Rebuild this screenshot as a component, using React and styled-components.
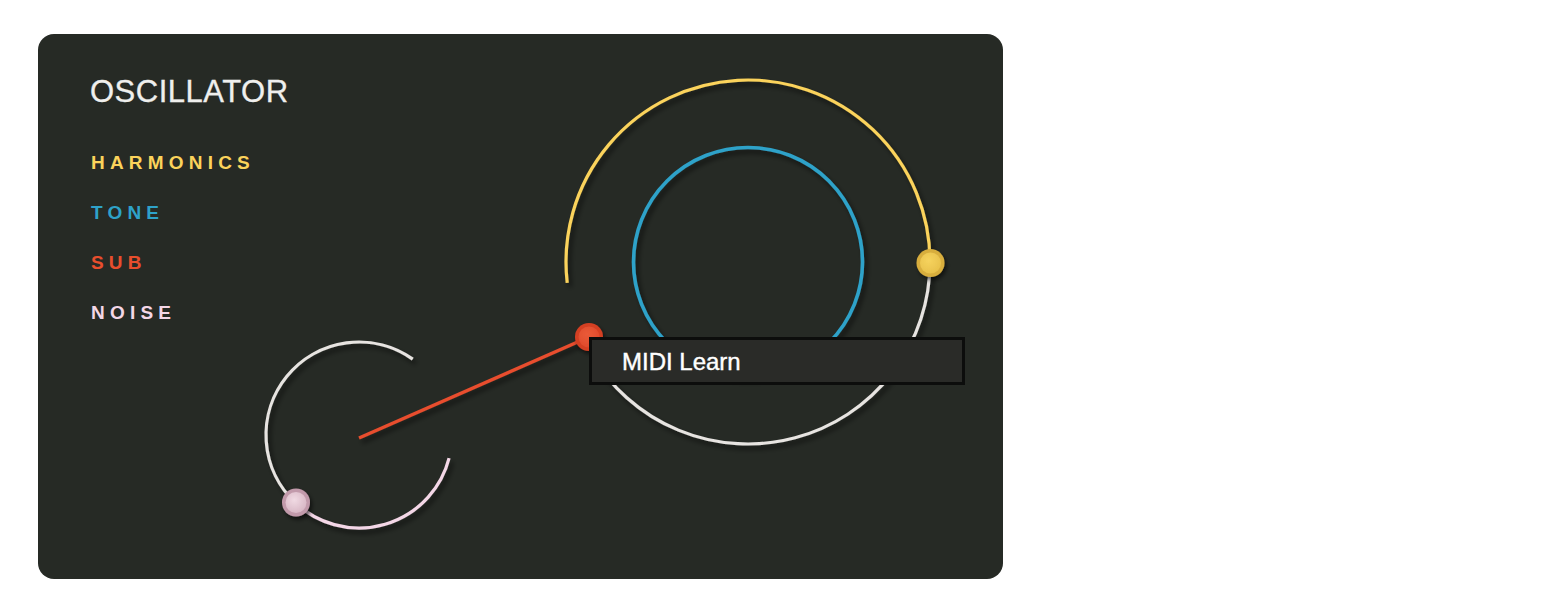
import React from 'react'
import styled, { createGlobalStyle } from 'styled-components'

const GlobalStyle = createGlobalStyle`
  html, body {
    margin: 0;
    padding: 0;
    background: #ffffff;
  }
  body {
    font-family: 'Liberation Sans', Arial, sans-serif;
  }
`

const colors = {
  panel: '#262a25',
  yellow: '#fbd35b',
  blue: '#2ea2c9',
  red: '#e84e2d',
  pink: '#f4d7e7',
  white: '#e7e4e1',
}

const params = [
  { name: 'HARMONICS', color: colors.yellow },
  { name: 'TONE', color: colors.blue },
  { name: 'SUB', color: colors.red },
  { name: 'NOISE', color: colors.pink },
]

const Page = styled.div`
  padding: 34px 0 0 38px;
`

const Panel = styled.section`
  position: relative;
  display: grid;
  width: 965px;
  height: 545px;
  background: ${colors.panel};
  border-radius: 16px;
  overflow: hidden;
`

const Info = styled.div`
  grid-area: 1 / 1;
  display: flex;
  flex-direction: column;
  padding: 42px 0 0 53px;
  z-index: 1;
`

const Title = styled.h1`
  margin: 0 0 46px -1px;
  font-size: 31px;
  line-height: 1;
  font-weight: 400;
  letter-spacing: 0.5px;
  color: #efefed;
  -webkit-text-stroke: 0.3px #efefed;
`

const ParamList = styled.ul`
  display: flex;
  flex-direction: column;
  gap: 31px;
  margin: 0;
  padding: 0;
  list-style: none;
`

const Param = styled.li`
  font-size: 19px;
  line-height: 1;
  font-weight: 700;
  letter-spacing: 5.2px;
  color: ${(props) => props.color};
`

const Stage = styled.svg`
  grid-area: 1 / 1;
  width: 965px;
  height: 545px;
  display: block;
`

const Tooltip = styled.div`
  position: absolute;
  left: 551px;
  top: 303px;
  width: 376px;
  height: 48px;
  box-sizing: border-box;
  padding: 2px 0 0 30px;
  border: 3px solid #0c0d0c;
  background: #2a2b28;
  color: #ffffff;
  font-size: 24px;
  line-height: 40px;
  -webkit-text-stroke: 0.4px #ffffff;
  z-index: 2;
`

const polar = (cx, cy, r, deg) => {
  const rad = (deg * Math.PI) / 180
  return [cx + r * Math.cos(rad), cy + r * Math.sin(rad)]
}

const arcPath = (cx, cy, r, a0, a1) => {
  const [x0, y0] = polar(cx, cy, r, a0)
  const [x1, y1] = polar(cx, cy, r, a1)
  const large = a1 - a0 > 180 ? 1 : 0
  return `M ${x0} ${y0} A ${r} ${r} 0 ${large} 1 ${x1} ${y1}`
}

const Dot = ({ x, y, rim, light, mid, id }) => (
  <g filter="url(#dotShadow)">
    <defs>
      <radialGradient id={id} cx="42%" cy="38%" r="65%">
        <stop offset="0%" stopColor={light} />
        <stop offset="100%" stopColor={mid} />
      </radialGradient>
    </defs>
    <circle cx={x} cy={y} r="14" fill={rim} />
    <circle cx={x} cy={y} r="10.5" fill={`url(#${id})`} />
  </g>
)

const BIG = { cx: 710, cy: 228, r: 182 }
const SMALL = { cx: 321, cy: 401, r: 93 }

const Knobs = () => (
  <Stage viewBox="0 0 965 545">
    <defs>
      <filter id="arcShadow" x="-20%" y="-20%" width="140%" height="140%">
        <feDropShadow dx="3" dy="4" stdDeviation="2.5" floodColor="#000" floodOpacity="0.55" />
      </filter>
      <filter id="dotShadow" x="-50%" y="-50%" width="200%" height="200%">
        <feDropShadow dx="2" dy="3" stdDeviation="2" floodColor="#000" floodOpacity="0.6" />
      </filter>
    </defs>

    <g filter="url(#arcShadow)" fill="none" strokeWidth="3.2">
      <path d={arcPath(BIG.cx, BIG.cy, BIG.r, 173.4, 360)} stroke={colors.yellow} />
      <path d={arcPath(BIG.cx, BIG.cy, BIG.r, 0, 150)} stroke={colors.white} />
      <circle cx={BIG.cx} cy={BIG.cy} r="114.5" stroke={colors.blue} strokeWidth="3.6" />
      <path d={arcPath(SMALL.cx, SMALL.cy, SMALL.r, 14.4, 133)} stroke={colors.pink} />
      <path d={arcPath(SMALL.cx, SMALL.cy, SMALL.r, 133, 305.3)} stroke={colors.white} />
      <line x1="321" y1="404" x2="551" y2="303" stroke={colors.red} strokeWidth="3.4" />
    </g>

    <Dot id="gYellow" x={892.5} y={229} rim="#d8ae3e" light="#f6d35e" mid="#e8c14b" />
    <Dot id="gPink" x={258} y={468.5} rim="#c29aab" light="#f0dae3" mid="#d8b7c5" />
    <Dot id="gRed" x={551} y={303} rim="#d43f24" light="#ea5a38" mid="#de4a2b" />
  </Stage>
)

const App = () => (
  <Page>
    <GlobalStyle />
    <Panel>
      <Info>
        <Title>OSCILLATOR</Title>
        <ParamList>
          {params.map((p) => (
            <Param key={p.name} color={p.color}>
              {p.name}
            </Param>
          ))}
        </ParamList>
      </Info>
      <Knobs />
      <Tooltip>MIDI Learn</Tooltip>
    </Panel>
  </Page>
)

export default App
